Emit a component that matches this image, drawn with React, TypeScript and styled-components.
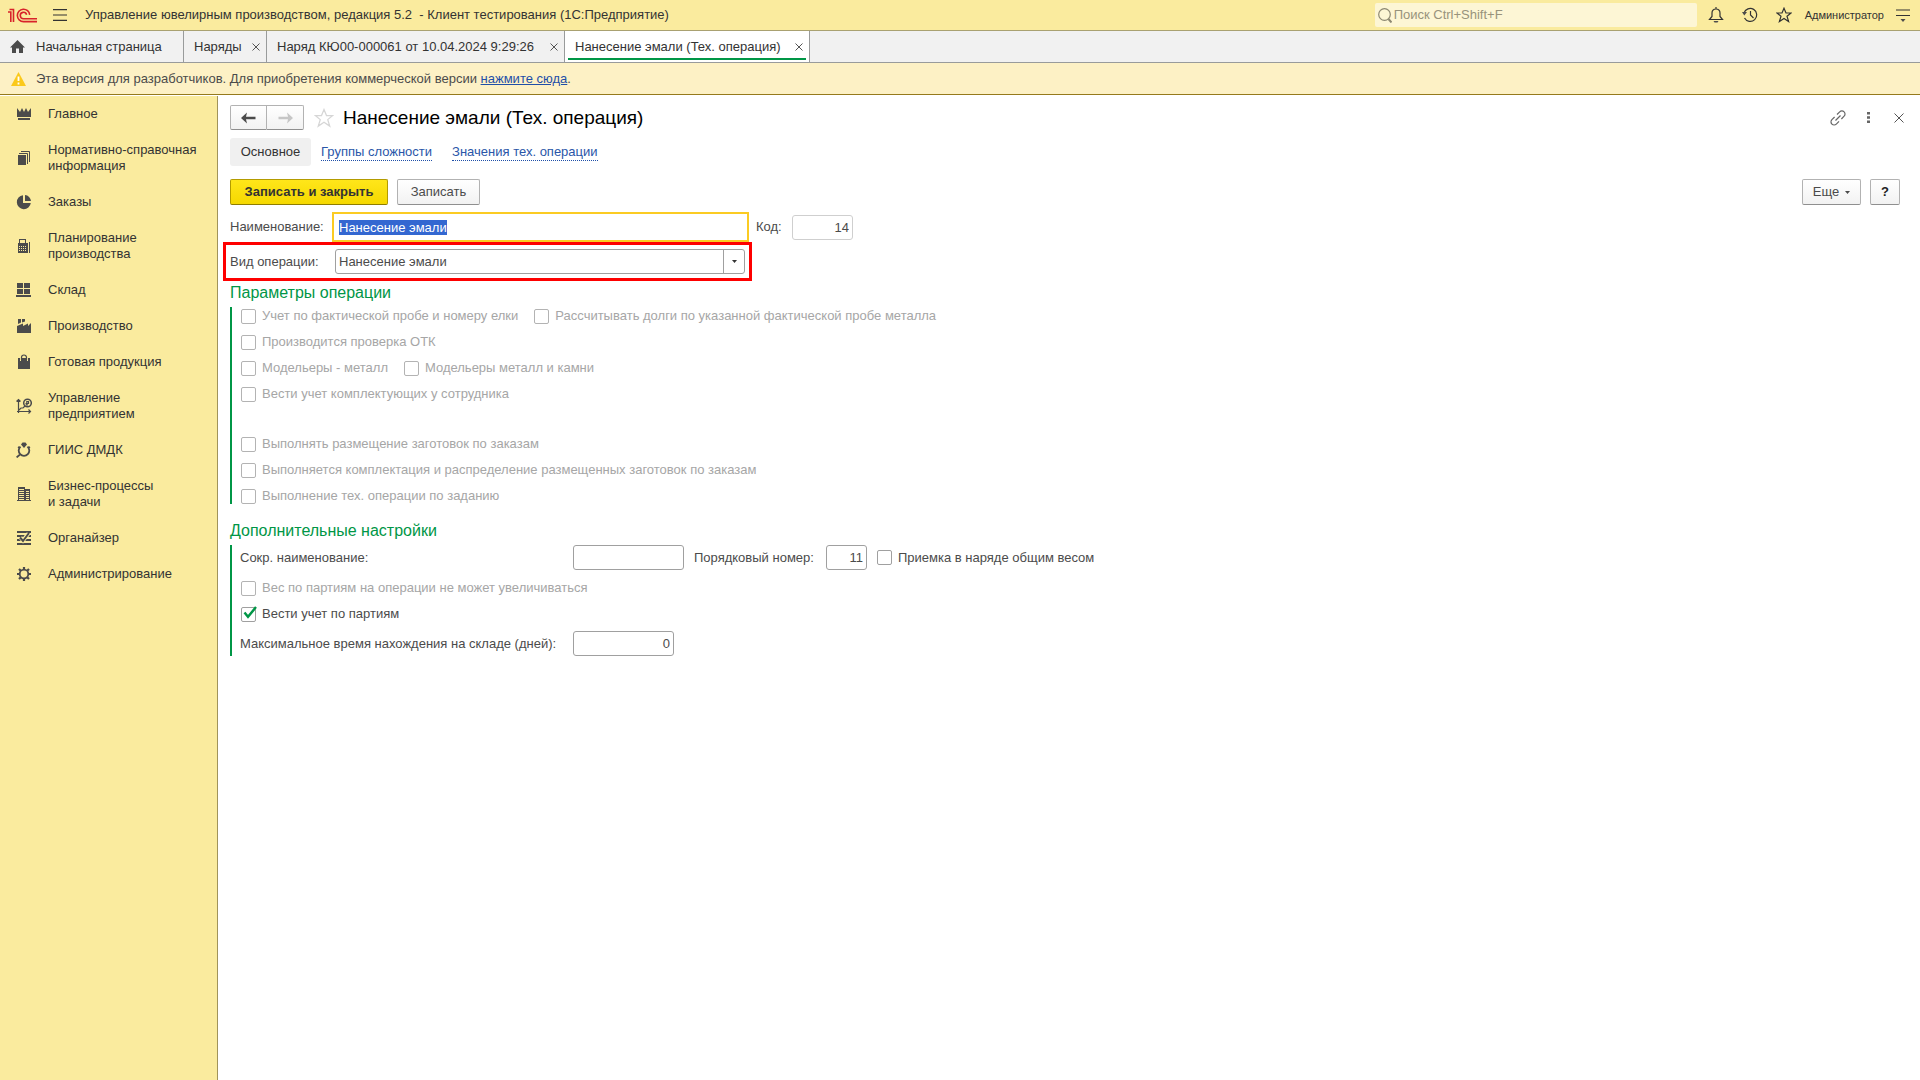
import React, { useEffect, useRef } from "react";
import styled, { createGlobalStyle, css } from "styled-components";

const ink = "#4b4b4b";
const dark = "#333333";
const green = "#009646";

const GlobalStyle = createGlobalStyle`
  *, *::before, *::after { box-sizing: border-box; }
  body { margin: 0; background: #fff; }
  body, button, input, select {
    font-family: "Liberation Sans", Arial, sans-serif;
    font-size: 13px;
    line-height: 16px;
    color: ${ink};
  }
  svg { display: block; flex: none; }
`;

const Page = styled.div`
  display: flex;
  flex-direction: column;
  min-height: 100vh;
`;

const TopBar = styled.header`
  display: flex;
  align-items: center;
  height: 31px;
  padding: 0 2px 0 8px;
  background: #faeb9e;
  border-bottom: 1px solid #a9a171;
  color: ${dark};
`;

const IconButton = styled.button<{ $w?: number }>`
  display: flex;
  align-items: center;
  justify-content: center;
  width: ${(p) => p.$w ?? 34}px;
  height: 24px;
  padding: 0;
  border: 0;
  background: none;
  color: #333;
`;

const AppTitle = styled.div`
  flex: 1;
  padding-left: 2px;
  white-space: pre;
`;

const Search = styled.label`
  display: flex;
  align-items: center;
  gap: 2px;
  width: 322px;
  height: 24px;
  margin-right: 2px;
  padding: 0 3px;
  border-radius: 2px;
  background: #fdf6d5;
`;

const SearchInput = styled.input`
  flex: 1;
  min-width: 0;
  padding: 0;
  border: 0;
  background: none;
  outline: none;
  &::placeholder { color: #98937c; opacity: 1; }
`;

const UserButton = styled.button`
  padding: 0 4px;
  border: 0;
  background: none;
  font-size: 11px;
  color: ${dark};
`;

const TabBar = styled.nav`
  display: flex;
  height: 32px;
  background: #f1f1f1;
  border-bottom: 1px solid #999b9b;
`;

const Tab = styled.div<{ $w: number; $active?: boolean }>`
  position: relative;
  display: flex;
  align-items: center;
  justify-content: space-between;
  min-width: ${(p) => p.$w}px;
  padding: 0 6px 0 10px;
  border-right: 1px solid #999b9b;
  background: ${(p) => (p.$active ? "#fff" : "none")};
  ${(p) =>
    p.$active &&
    css`
      &::after {
        content: "";
        position: absolute;
        left: 3px;
        right: 3px;
        bottom: 2px;
        height: 2px;
        background: ${green};
      }
    `}
`;

const TabLabel = styled.button`
  display: flex;
  align-items: center;
  gap: 11px;
  padding: 0;
  border: 0;
  background: none;
  color: ${dark};
  white-space: nowrap;
`;

const Close = styled.button`
  padding: 0;
  border: 0;
  background: none;
  color: ${ink};
`;

const Notice = styled.div`
  display: flex;
  align-items: center;
  gap: 10px;
  height: 32px;
  padding-left: 11px;
  background: #fdf1c5;
  border-bottom: 1px solid #957a1c;
`;

const NoticeLink = styled.a`
  color: #1f4fa8;
`;

const Body = styled.div`
  display: flex;
  flex: 1;
  padding-top: 1px;
`;

const Sidebar = styled.nav`
  width: 218px;
  background: #faeb9e;
  border-right: 1px solid #a0935a;
`;

const SideItem = styled.a`
  display: flex;
  align-items: center;
  gap: 16px;
  padding: 10px 0 10px 16px;
  color: ${dark};
  text-decoration: none;
  white-space: pre-line;
`;

const Main = styled.main`
  flex: 1;
  min-width: 0;
  padding: 9px 6px 0 12px;
`;

const Row = styled.div<{ $gap?: number; $h?: number; $mt?: number }>`
  display: flex;
  align-items: center;
  gap: ${(p) => p.$gap ?? 0}px;
  min-height: ${(p) => p.$h ?? 26}px;
  margin-top: ${(p) => p.$mt ?? 0}px;
`;

const Toolbar = styled(Row)`
  padding-right: 14px;
`;

const CodeField = styled(Row)`
  padding-left: 7px;
`;

const Spacer = styled.div`
  flex: 1;
`;

const NavGroup = styled.div`
  display: flex;
`;

const NavButton = styled.button<{ $side: "left" | "right" }>`
  display: flex;
  align-items: center;
  justify-content: center;
  width: 37px;
  height: 25px;
  padding: 0;
  border: 1px solid #b2b2b2;
  border-bottom-color: #8f8f8f;
  border-left-width: ${(p) => (p.$side === "left" ? 1 : 0)}px;
  border-radius: ${(p) => (p.$side === "left" ? "2px 0 0 2px" : "0 2px 2px 0")};
  background: linear-gradient(#fff, #f2f2f2);
  color: ${(p) => (p.$side === "left" ? ink : "#c6c6c6")};
`;

const Title = styled.h1`
  margin: 0;
  font-size: 19px;
  line-height: 24px;
  font-weight: 400;
  color: #000;
`;

const CurrentLink = styled.span`
  min-width: 81px;
  margin-right: 10px;
  padding: 6px 0;
  border-radius: 3px;
  background: #f0f0f0;
  text-align: center;
  color: ${dark};
`;

const FormLink = styled.a`
  margin-right: 20px;
  border-bottom: 1px dotted #1f4fa8;
  color: #2a56a8;
  text-decoration: none;
`;

const Button = styled.button<{ $primary?: boolean; $w?: number }>`
  display: flex;
  align-items: center;
  justify-content: center;
  gap: 6px;
  min-width: ${(p) => p.$w ?? 0}px;
  height: 26px;
  padding: 0;
  border: 1px solid ${(p) => (p.$primary ? "#b39b00" : "#b2b2b2")};
  border-bottom-color: ${(p) => (p.$primary ? "#8f7d00" : "#8f8f8f")};
  border-radius: 2px;
  background: ${(p) => (p.$primary ? "linear-gradient(#ffe61a, #f5d800)" : "linear-gradient(#fff, #f2f2f2)")};
  font-weight: ${(p) => (p.$primary ? 700 : 400)};
  color: ${(p) => (p.$primary ? dark : ink)};
`;

const Help = styled(Button)`
  font-weight: 700;
  color: #222;
`;

const FieldLabel = styled.label<{ $w?: number }>`
  width: ${(p) => (p.$w ? p.$w + "px" : "auto")};
  white-space: nowrap;
`;

const Input = styled.input<{ $w: number; $pale?: boolean; $num?: boolean }>`
  width: ${(p) => p.$w}px;
  height: 25px;
  padding: 0 3px;
  border: 1px solid ${(p) => (p.$pale ? "#cfcfcf" : "#a0a0a0")};
  border-radius: 3px;
  background: #fff;
  outline: none;
  text-align: ${(p) => (p.$num ? "right" : "left")};
`;

const NameInput = styled.input`
  width: 417px;
  height: 30px;
  padding: 0 5px;
  border: 2px solid #fbcb23;
  background: #fff;
  outline: none;
  &::selection { background: #3367d1; color: #fff; }
`;

const Highlight = styled.div`
  display: flex;
  align-items: center;
  width: 529px;
  height: 39px;
  margin-left: -7px;
  padding-left: 4px;
  border: 3px solid #fe0000;
`;

const Combo = styled.div`
  display: grid;
  width: 410px;
  height: 25px;
`;

const Select = styled.select`
  grid-area: 1 / 1;
  padding: 0 3px;
  border: 1px solid #a0a0a0;
  border-radius: 3px;
  appearance: none;
  background: #fff;
  outline: none;
`;

const ComboArrow = styled.span`
  grid-area: 1 / 1;
  justify-self: end;
  display: flex;
  align-items: center;
  justify-content: center;
  width: 22px;
  border-left: 1px solid #a0a0a0;
  pointer-events: none;
`;

const SectionTitle = styled.h2<{ $mt: number }>`
  margin: ${(p) => p.$mt}px 0 4px;
  font-size: 16px;
  line-height: 20px;
  font-weight: 400;
  color: ${green};
`;

const Section = styled.section<{ $top?: number }>`
  padding: ${(p) => p.$top ?? 0}px 0 0 8px;
  border-left: 2px solid ${green};
`;

const CheckRow = styled.div<{ $mt?: number }>`
  display: flex;
  align-items: center;
  gap: 16px;
  height: 16px;
  margin-top: ${(p) => p.$mt ?? 10}px;
  padding-left: 1px;
`;

const CheckLabel = styled.label<{ $disabled?: boolean }>`
  display: flex;
  align-items: center;
  gap: 6px;
  white-space: nowrap;
  color: ${(p) => (p.$disabled ? "#a6a6a6" : ink)};
`;

const CheckBox = styled.input`
  appearance: none;
  width: 15px;
  height: 15px;
  margin: 0;
  border: 1px solid #a0a0a0;
  border-radius: 2px;
  background: #fff;
  &:disabled { border-color: #b3b3b3; }
`;

const CheckHolder = styled.span`
  display: grid;
  & > * { grid-area: 1 / 1; }
  & > svg { overflow: visible; pointer-events: none; }
`;

function Check({ label, disabled, checked }: { label: string; disabled?: boolean; checked?: boolean }) {
  return (
    <CheckLabel $disabled={disabled}>
      <CheckHolder>
        <CheckBox type="checkbox" disabled={disabled} defaultChecked={checked} />
        {checked && (
          <svg width="15" height="15" viewBox="0 0 15 15">
            <path d="M3.500 5.500 7 9.800 15 0" fill="none" stroke={green} strokeWidth="2.400" />
          </svg>
        )}
      </CheckHolder>
      {label}
    </CheckLabel>
  );
}

function Svg({ w = 16, h = 16, children }: { w?: number; h?: number; children: React.ReactNode }) {
  return (
    <svg width={w} height={h} viewBox={`0 0 ${w} ${h}`} fill="none" stroke="currentColor" strokeWidth="1.200">
      {children}
    </svg>
  );
}

const Cross = ({ s = 7 }: { s?: number }) => (
  <svg width={s + 1} height={s + 1} viewBox={`0 0 ${s + 1} ${s + 1}`} fill="none" stroke="#555" strokeWidth="1">
    <path d={`M.5 .5 ${s + 0.5} ${s + 0.5}M${s + 0.5} .5 .5 ${s + 0.5}`} />
  </svg>
);

const fill = { fill: "#4b4b4b", stroke: "none" };

const sections: { text: string; icon: React.ReactNode }[] = [
  {
    text: "Главное",
    icon: <path {...fill} d="M1 2l3 4 2-4 2 4 2-4 2 4 3-4v9H1zM2 12h12v2H2z" />,
  },
  {
    text: "Нормативно-справочная\nинформация",
    icon: (
      <>
        <path {...fill} d="M2 5h8v10H2z" />
        <path stroke="#4b4b4b" strokeWidth="1" d="M3 3.500h8.500V14M5 1.500h8.500V12" />
      </>
    ),
  },
  {
    text: "Заказы",
    icon: <path {...fill} d="M7 1.200V9h7.800A7 7 0 1 1 7 1.200zM9 1a6.500 6.500 0 0 1 6 6H9z" />,
  },
  {
    text: "Планирование\nпроизводства",
    icon: (
      <>
        <path {...fill} fillRule="evenodd" d="M3 1h7v4h2v10H2V5h1zM4 2v3h5V2zM3 8v1h1V8zm2 0v1h1V8zm2 0v1h1V8zm2 0v1h1V8zM3 10v1h1v-1zm2 0v1h1v-1zm2 0v1h1v-1zm2 0v1h1v-1zM3 12v1h1v-1zm2 0v1h1v-1zm2 0v1h1v-1zm2 0v1h1v-1z" />
        <path {...fill} d="M13 4h1v11h-1z" />
      </>
    ),
  },
  { text: "Склад", icon: <path {...fill} d="M1 1h6v5H1zM8 1h6v5H8zM1 7h6v5H1zM8 7h6v5H8zM0 13h15v2H0z" /> },
  {
    text: "Производство",
    icon: <path {...fill} d="M2 1h3v3.500L2 6zM6 1h3v2.500L6 4.500zM1 8l6-2.500V8l5-2.500V8l3-3v10H1z" />,
  },
  {
    text: "Готовая продукция",
    icon: (
      <>
        <path {...fill} d="M2 4h12v11H2z" />
        <path stroke="#faeb9e" strokeWidth="1" d="M4.500 4v3M11.500 4v3" />
        <path stroke="#4b4b4b" strokeWidth="1.200" d="M5.500 6V3.500a2.500 2.500 0 0 1 5 0V6" />
      </>
    ),
  },
  {
    text: "Управление\nпредприятием",
    icon: (
      <>
        <path stroke="#4b4b4b" d="M2.500 1v14M.5 3.500l2-2 2 2M1 13.500h14M12.500 11.500l2 2-2 2M3 12l2-2 2 0 2-2" />
        <circle cx="11.500" cy="5" r="3.800" stroke="#4b4b4b" strokeWidth="1.500" />
        <path stroke="#4b4b4b" strokeWidth="1.200" d="M10.800 3v4.500M10.500 3.500h2v2h-3M9.500 7h2.500" />
      </>
    ),
  },
  {
    text: "ГИИС ДМДК",
    icon: (
      <>
        <path {...fill} d="M5 2.500 6.500.5h3L11 2.500 8 6z" />
        <path stroke="#4b4b4b" strokeWidth="1.800" d="M4.500 4.600a5.300 5.300 0 1 0 7 0M4 12.500 .6 15.400M2 5l2 1M14 5l-2 1" />
      </>
    ),
  },
  {
    text: "Бизнес-процессы\nи задачи",
    icon: (
      <path {...fill} fillRule="evenodd" d="M2 1h7v2h5v11h1v1H1v-1h1zM3 3v1h5V3zm0 2v1h5V5zm0 2v1h5V7zm0 2v1h5V9zm0 2v1h5v-1zm0 2v1h5v-1zM10 5v1h3V5zm0 2v1h3V7zm0 2v1h3V9zm0 2v1h3v-1zm0 2v1h3v-1z" />
    ),
  },
  {
    text: "Органайзер",
    icon: (
      <>
        <path stroke="#4b4b4b" strokeWidth="2" d="M1 2h14M1 6h14M1 10h14M1 14h14" />
        <path stroke="#faeb9e" strokeWidth="4" d="M4.500 7.500 7 10.500 12.500 3.500" />
        <path stroke="#4b4b4b" strokeWidth="2" d="M4 7.500 7 11 13 3" />
      </>
    ),
  },
  {
    text: "Администрирование",
    icon: (
      <>
        <circle cx="8" cy="8" r="4.300" stroke="#4b4b4b" strokeWidth="1.800" />
        <path stroke="#4b4b4b" strokeWidth="2.200" d="M8 1v2.500M8 12.500V15M1 8h2.500M12.500 8H15M3 3l1.800 1.800M11.200 11.200 13 13M13 3l-1.800 1.800M4.800 11.200 3 13" />
      </>
    ),
  },
];

const starPath = "M8 1.200 10 6h5l-4 3.300 1.600 5.200L8 11.400l-4.600 3.100L5 9.300 1 6h5z";

const tabs = [
  { text: "Наряды", width: 83 },
  { text: "Наряд КЮ00-000061 от 10.04.2024 9:29:26", width: 298 },
  { text: "Нанесение эмали (Тех. операция)", width: 245, active: true },
];

export default function App() {
  const nameRef = useRef<HTMLInputElement>(null);
  useEffect(() => {
    nameRef.current?.focus();
    nameRef.current?.select();
  }, []);

  return (
    <Page>
      <GlobalStyle />
      <TopBar>
        <svg width="29" height="15" viewBox="0 0 29 15" fill="none" stroke="#d8232a" strokeWidth="1.600">
          <path d="M0 4h2.800v10M1.500 1.500h4V14" />
          <path d="M21.700 6.800A6.200 6.200 0 1 0 15.500 13.600H29" />
          <path d="M18.600 6.800A3.200 3.200 0 1 0 15.500 10.700H29" />
        </svg>
        <IconButton $w={46} aria-label="Меню">
          <Svg w={14} h={12}>
            <path d="M0 .6h14M0 6h14M0 11.400h14" />
          </Svg>
        </IconButton>
        <AppTitle>{"Управление ювелирным производством, редакция 5.2  - Клиент тестирования (1С:Предприятие)"}</AppTitle>
        <Search>
          <svg width="14" height="15" viewBox="0 0 14 15" fill="none" stroke="#8d8872" strokeWidth="1.200">
            <circle cx="6.500" cy="6.500" r="5.800" />
            <path strokeWidth="2" d="M10.500 11l3 3.500" />
          </svg>
          <SearchInput aria-label="Поиск" placeholder="Поиск Ctrl+Shift+F" />
        </Search>
        <IconButton aria-label="Уведомления">
          <Svg>
            <path d="M1.500 12.500h13L12 9.500V6c0-2.500-1.500-4-4-4S4 3.500 4 6v3.500zM8 0v2" />
            <path {...fill} d="M5.500 14h5l-1 1.500h-3z" />
          </Svg>
        </IconButton>
        <IconButton aria-label="История">
          <Svg>
            <path d="M2 6a6.500 6.500 0 1 1 .5 5M8.500 4v4l3 3" />
            <path {...fill} d="M0 5h5L2.300 8.500z" />
          </Svg>
        </IconButton>
        <IconButton aria-label="Избранное">
          <Svg>
            <path d={starPath} />
          </Svg>
        </IconButton>
        <UserButton>Администратор</UserButton>
        <IconButton $w={30} aria-label="Настройки">
          <Svg w={14} h={13}>
            <path d="M0 1h14M0 6.500h14" />
            <path {...fill} d="M4.500 10h5L7 13z" />
          </Svg>
        </IconButton>
      </TopBar>

      <TabBar>
        <Tab $w={184}>
          <TabLabel>
            <svg width="15" height="13" viewBox="0 0 15 13" fill="#4b4b4b">
              <path d="M7.500 0 15 7.500h-2V13H9V8.500H6V13H2V7.500H0z" />
            </svg>
            Начальная страница
          </TabLabel>
        </Tab>
        {tabs.map((t) => (
          <Tab key={t.text} $w={t.width} $active={t.active}>
            <TabLabel>{t.text}</TabLabel>
            <Close aria-label="Закрыть">
              <Cross />
            </Close>
          </Tab>
        ))}
      </TabBar>

      <Notice>
        <svg width="15" height="14" viewBox="0 0 15 14">
          <path d="M7.500 0 15 14H0z" fill="#fbc91b" />
          <path d="M7.500 4.500v4.500M7.500 10.500v2" stroke="#fff" strokeWidth="1.800" />
        </svg>
        <span>
          Эта версия для разработчиков. Для приобретения коммерческой версии <NoticeLink href="#buy">нажмите сюда</NoticeLink>.
        </span>
      </Notice>

      <Body>
        <Sidebar>
          {sections.map((s) => (
            <SideItem href="#section" key={s.text}>
              <Svg>{s.icon}</Svg>
              {s.text}
            </SideItem>
          ))}
        </Sidebar>

        <Main>
          <Row $h={25}>
            <NavGroup>
              <NavButton $side="left" aria-label="Назад">
                <svg width="15" height="12" viewBox="0 0 15 12" fill="currentColor">
                  <path d="M0 6 6 .5 5 4.800h9.500v2.400H5L6 11.500z" />
                </svg>
              </NavButton>
              <NavButton $side="right" aria-label="Вперед">
                <svg width="15" height="12" viewBox="0 0 15 12" fill="currentColor">
                  <path d="M15 6 9 .5l1 4.300H.5v2.400H10l-1 4.300z" />
                </svg>
              </NavButton>
            </NavGroup>
            <IconButton $w={39} aria-label="В избранное">
              <svg width="20" height="20" viewBox="0 0 16 16" fill="none" stroke="#d6d6d6">
                <path d={starPath} />
              </svg>
            </IconButton>
            <Title>Нанесение эмали (Тех. операция)</Title>
            <Spacer />
            <IconButton $w={30} aria-label="Ссылка">
              <svg width="16" height="16" viewBox="0 0 16 16" fill="none" stroke="#666" strokeWidth="1.200">
                <path d="M7 4.500 9.700 1.800a3 3 0 0 1 4.400 4.400L11.400 9M4.600 7 1.900 9.700a3 3 0 0 0 4.400 4.400L9 11.400M5.500 10.500l5-5" />
              </svg>
            </IconButton>
            <IconButton $w={31} aria-label="Дополнительно">
              <svg width="3" height="11" viewBox="0 0 3 11" fill="#666">
                <path d="M0 0h3v2.500H0zM0 4.250h3v2.500H0zM0 8.500h3V11H0z" />
              </svg>
            </IconButton>
            <IconButton $w={30} aria-label="Закрыть форму">
              <Cross s={9} />
            </IconButton>
          </Row>

          <Row $h={28} $mt={8}>
            <CurrentLink>Основное</CurrentLink>
            <FormLink href="#groups">Группы сложности</FormLink>
            <FormLink href="#values">Значения тех. операции</FormLink>
          </Row>

          <Toolbar $mt={13} $gap={9}>
            <Button $primary $w={158}>Записать и закрыть</Button>
            <Button $w={83}>Записать</Button>
            <Spacer />
            <Button $w={59}>
              Еще
              <svg width="5" height="3" viewBox="0 0 5 3" fill="#4b4b4b">
                <path d="M0 0h5L2.500 3z" />
              </svg>
            </Button>
            <Help $w={30}>?</Help>
          </Toolbar>

          <Row $h={30} $mt={7}>
            <FieldLabel $w={102} htmlFor="name">Наименование:</FieldLabel>
            <NameInput id="name" ref={nameRef} defaultValue="Нанесение эмали" />
            <CodeField $gap={10} $h={30}>
              <FieldLabel htmlFor="code" $w={26}>Код:</FieldLabel>
              <Input id="code" $w={61} $pale $num defaultValue="14" />
            </CodeField>
          </Row>
          <Highlight>
            <FieldLabel $w={105} htmlFor="kind">Вид операции:</FieldLabel>
            <Combo>
              <Select id="kind">
                <option>Нанесение эмали</option>
              </Select>
              <ComboArrow>
                <svg width="5" height="3" viewBox="0 0 5 3" fill="#333">
                  <path d="M0 0h5L2.500 3z" />
                </svg>
              </ComboArrow>
            </Combo>
          </Highlight>

          <SectionTitle $mt={2}>Параметры операции</SectionTitle>
          <Section $top={1}>
            <CheckRow $mt={0}>
              <Check disabled label="Учет по фактической пробе и номеру елки" />
              <Check disabled label="Рассчитывать долги по указанной фактической пробе металла" />
            </CheckRow>
            <CheckRow>
              <Check disabled label="Производится проверка ОТК" />
            </CheckRow>
            <CheckRow>
              <Check disabled label="Модельеры - металл" />
              <Check disabled label="Модельеры металл и камни" />
            </CheckRow>
            <CheckRow>
              <Check disabled label="Вести учет комплектующих у сотрудника" />
            </CheckRow>
            <CheckRow $mt={34}>
              <Check disabled label="Выполнять размещение заготовок по заказам" />
            </CheckRow>
            <CheckRow>
              <Check disabled label="Выполняется комплектация и распределение размещенных заготовок по заказам" />
            </CheckRow>
            <CheckRow>
              <Check disabled label="Выполнение тех. операции по заданию" />
            </CheckRow>
          </Section>

          <SectionTitle $mt={17}>Дополнительные настройки</SectionTitle>
          <Section>
            <Row $h={25}>
              <FieldLabel $w={333} htmlFor="short">Сокр. наименование:</FieldLabel>
              <Row $h={25} $gap={10}>
                <Input id="short" $w={111} />
                <FieldLabel $w={122} htmlFor="order">Порядковый номер:</FieldLabel>
                <Input id="order" $w={41} $num defaultValue="11" />
                <Check label="Приемка в наряде общим весом" />
              </Row>
            </Row>
            <CheckRow>
              <Check disabled label="Вес по партиям на операции не может увеличиваться" />
            </CheckRow>
            <CheckRow>
              <Check checked label="Вести учет по партиям" />
            </CheckRow>
            <Row $h={25} $mt={9}>
              <FieldLabel $w={333} htmlFor="days">Максимальное время нахождения на складе (дней):</FieldLabel>
              <Input id="days" $w={101} $num defaultValue="0" />
            </Row>
          </Section>
        </Main>
      </Body>
    </Page>
  );
}
